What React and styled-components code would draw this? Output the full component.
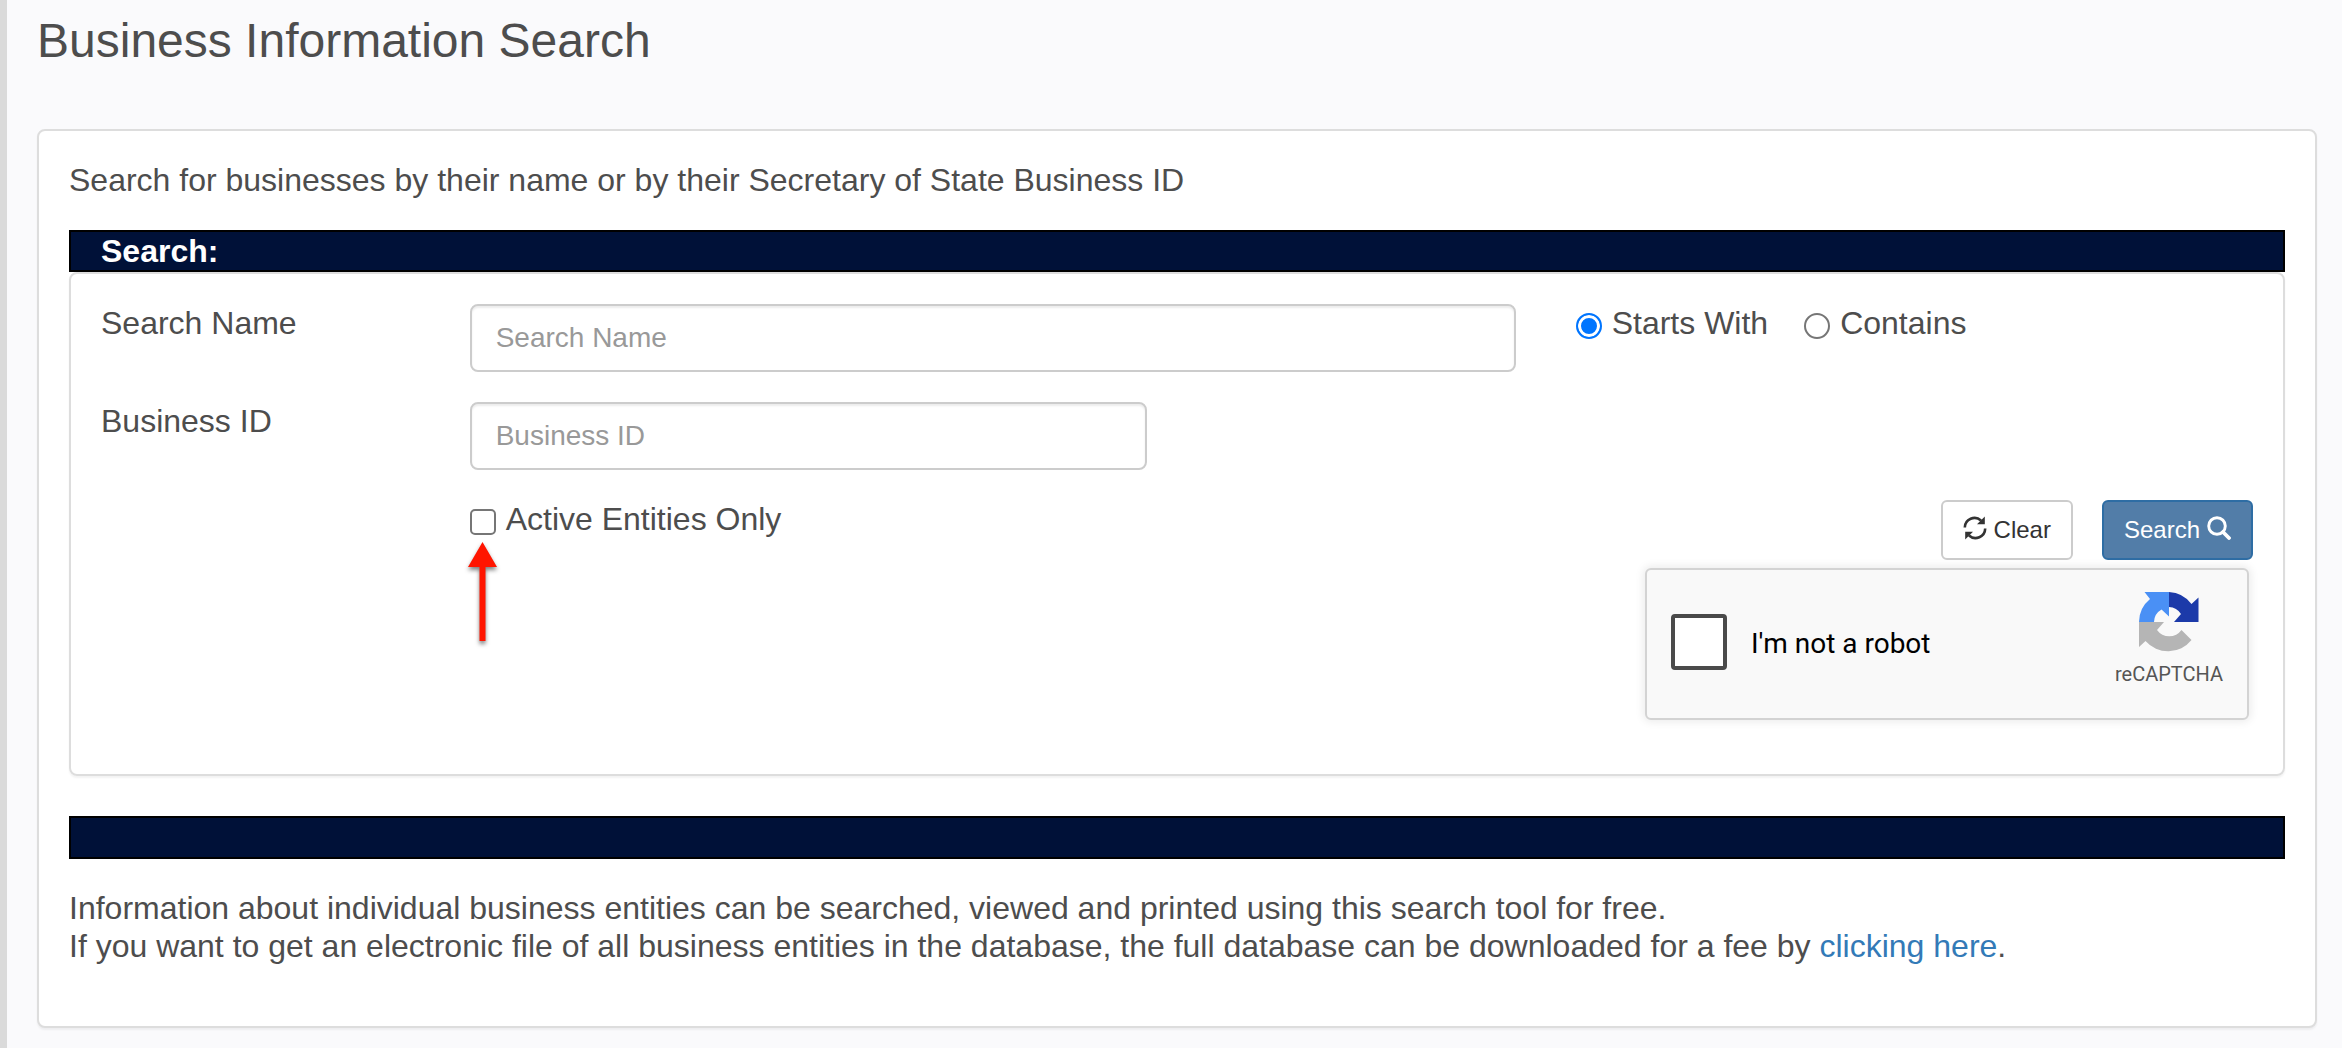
import React, { useState } from "react"
import styled, { createGlobalStyle } from "styled-components"

const GlobalStyle = createGlobalStyle`
  * {
    box-sizing: border-box;
  }

  body {
    margin: 0;
    background: #fafafc;
    color: #4d4d4d;
    font-family: "Liberation Sans", Arial, sans-serif;
    font-size: 32px;
    line-height: 38px;
  }
`

const RefreshIcon = () => (
  <IconSvg viewBox="0 0 24 24" aria-hidden="true">
    <path d="M1.8 11.500A9.700 9.700 0 0 1 18 4.500" fill="none" stroke="currentColor" strokeWidth="2.600" />
    <path d="M21.800 0.500V8.200H14Z" fill="currentColor" />
    <path d="M22.200 12.500A9.700 9.700 0 0 1 6 19.500" fill="none" stroke="currentColor" strokeWidth="2.600" />
    <path d="M2.200 23.500V15.800H10Z" fill="currentColor" />
  </IconSvg>
)

const SearchIcon = () => (
  <IconSvg viewBox="0 0 24 24" aria-hidden="true">
    <circle cx="10" cy="10" r="8.300" fill="none" stroke="currentColor" strokeWidth="2.900" />
    <path d="M16 16L22 22" stroke="currentColor" strokeWidth="3.800" strokeLinecap="round" />
  </IconSvg>
)

const CaptchaLogo = () => (
  <LogoSvg viewBox="0 0 60 60" aria-hidden="true">
    <path d="M30 0A30 30 0 0 1 52.500 12L59.500 5.500V30H35L42 22A15 15 0 0 0 30 15Z" fill="#1c3aa9" />
    <path d="M0 30A30 30 0 0 1 11 7L5.500 0H30V24.500L22.500 17.500A15 15 0 0 0 15 30Z" fill="#4a90f5" />
    <path d="M0 30H25L18 38A15 15 0 0 0 42.500 38L52.500 48A30 30 0 0 1 6.500 49L0 55Z" fill="#b5b5b5" />
  </LogoSvg>
)

const Arrow = () => (
  <ArrowSvg viewBox="0 0 29 102" aria-hidden="true">
    <path d="M14.500 0L29 25H17.500V99H11.500V25H0Z" fill="#ff1500" />
  </ArrowSvg>
)

const App = () => {
  const [name, setName] = useState("")
  const [businessId, setBusinessId] = useState("")
  const [mode, setMode] = useState("starts")
  const [activeOnly, setActiveOnly] = useState(false)

  const clear = () => {
    setName("")
    setBusinessId("")
    setMode("starts")
    setActiveOnly(false)
  }

  return (
    <Page>
      <GlobalStyle />
      <Title>Business Information Search</Title>
      <Panel as="main">
        <Intro>
          Search for businesses by their name or by their Secretary of State
          Business ID
        </Intro>
        <Bar>Search:</Bar>
        <Form onSubmit={e => e.preventDefault()}>
          <Cell span={2}>
            <label htmlFor="name">Search Name</label>
          </Cell>
          <Cell span={6}>
            <Input
              id="name"
              placeholder="Search Name"
              value={name}
              onChange={e => setName(e.target.value)}
            />
          </Cell>
          <Options span={4}>
            <Choice>
              <Radio
                name="mode"
                checked={mode === "starts"}
                onChange={() => setMode("starts")}
              />
              Starts With
            </Choice>
            <Choice>
              <Radio
                name="mode"
                checked={mode === "contains"}
                onChange={() => setMode("contains")}
              />
              Contains
            </Choice>
          </Options>

          <Cell span={2}>
            <label htmlFor="businessId">Business ID</label>
          </Cell>
          <Cell span={4}>
            <Input
              id="businessId"
              placeholder="Business ID"
              value={businessId}
              onChange={e => setBusinessId(e.target.value)}
            />
          </Cell>

          <Cell start={3} span={4}>
            <Choice>
              <Checkbox
                checked={activeOnly}
                onChange={e => setActiveOnly(e.target.checked)}
              />
              Active Entities Only
              <Arrow />
            </Choice>
          </Cell>
          <Actions span={6}>
            <Buttons>
              <Button type="button" onClick={clear}>
                <RefreshIcon />
                Clear
              </Button>
              <Button type="submit" $primary>
                Search
                <SearchIcon />
              </Button>
            </Buttons>
            <Captcha>
              <CaptchaLabel>
                <CaptchaBox />
                I'm not a robot
              </CaptchaLabel>
              <Brand>
                <CaptchaLogo />
                reCAPTCHA
              </Brand>
            </Captcha>
          </Actions>
        </Form>
        <Bar $spaced />
        <p>
          Information about individual business entities can be searched,
          viewed and printed using this search tool for free.
          <br />
          If you want to get an electronic file of all business entities in the
          database, the full database can be downloaded for a fee by{" "}
          <Link href="#download">clicking here</Link>.
        </p>
      </Panel>
    </Page>
  )
}

export default App

const Page = styled.div`
  min-height: 100vh;
  padding: 13px 25px 20px 30px;
  border-left: 7px solid #dadada;

  p {
    margin: 0;
  }
`

const Title = styled.h1`
  margin: 0 0 60px;
  font-size: 48px;
  font-weight: 400;
  line-height: 56px;
`

const Panel = styled.div`
  padding: 30px 30px 61px;
  background: #fff;
  border: 2px solid #ddd;
  border-radius: 8px;
  box-shadow: 0 2px 2px rgba(0, 0, 0, 0.05);
`

const Intro = styled.p`
  padding-bottom: 31px;
`

const Bar = styled.div`
  min-height: ${({ $spaced }) => ($spaced ? "43px" : "42px")};
  margin: ${({ $spaced }) => ($spaced ? "40px 0 30px" : "0")};
  padding: 0 30px;
  color: #fff;
  font-weight: 700;
  background: #001138;
  border: 2px solid #000;
`

const Form = styled.form`
  display: grid;
  grid-template-columns: repeat(12, 1fr);
  gap: 30px 60px;
  padding: 30px 30px 54px;
  border: 2px solid #ddd;
  border-radius: 8px;
  box-shadow: 0 2px 2px rgba(0, 0, 0, 0.05);
`

const Cell = styled.div.withConfig({
  shouldForwardProp: prop => !["span", "start"].includes(prop)
})`
  grid-column: ${({ start = "auto", span }) => `${start} / span ${span}`};
`

const Options = styled(Cell)`
  display: flex;
  gap: 36px;
`

const Choice = styled.label`
  position: relative;
  display: inline-flex;
  gap: 10px;
`

const Input = styled.input`
  display: block;
  width: 100%;
  height: 68px;
  padding: 0 24px;
  color: #555;
  font: 28px "Liberation Sans", Arial, sans-serif;
  background: #fff;
  border: 2px solid #ccc;
  border-radius: 8px;
  box-shadow: inset 0 2px 2px rgba(0, 0, 0, 0.075);

  &::placeholder {
    color: #999;
  }
`

const Radio = styled.input.attrs({ type: "radio" })`
  appearance: none;
  width: 26px;
  height: 26px;
  margin: 9px 0 0;
  background: #fff;
  border: 2px solid #767676;
  border-radius: 50%;

  &:checked {
    background: #0075ff;
    border-color: #0075ff;
    box-shadow: inset 0 0 0 3px #fff;
  }
`

const Checkbox = styled.input.attrs({ type: "checkbox" })`
  width: 26px;
  height: 26px;
  margin: 9px 0 0;

  &:not(:checked) {
    appearance: none;
    background: #fff;
    border: 2px solid #767676;
    border-radius: 5px;
  }
`

const ArrowSvg = styled.svg`
  position: absolute;
  top: 42px;
  left: -2px;
  width: 29px;
  height: 102px;
  overflow: visible;
  filter: drop-shadow(0 3px 2px rgba(0, 0, 0, 0.5));
`

const Actions = styled(Cell)`
  display: flex;
  flex-direction: column;
  align-items: flex-end;
  gap: 8px;
`

const Buttons = styled.div`
  display: flex;
  gap: 29px;
`

const Button = styled.button`
  display: flex;
  align-items: center;
  gap: 7px;
  height: 60px;
  padding: 0 20px;
  color: ${({ $primary }) => ($primary ? "#fff" : "#333")};
  font: 24px "Liberation Sans", Arial, sans-serif;
  background: ${({ $primary }) => ($primary ? "#527da8" : "#fff")};
  border: 2px solid ${({ $primary }) => ($primary ? "#2e6da4" : "#ccc")};
  border-radius: 6px;
`

const IconSvg = styled.svg`
  width: 24px;
  height: 24px;
  margin-bottom: 4px;
`

const Captcha = styled.div`
  display: flex;
  align-items: center;
  justify-content: space-between;
  width: 604px;
  height: 152px;
  margin-right: 4px;
  padding: 0 24px;
  color: #000;
  font-family: Roboto, sans-serif;
  background: #f9f9f9;
  border: 2px solid #d3d3d3;
  border-radius: 6px;
  box-shadow: 0 0 8px 2px rgba(0, 0, 0, 0.08);
`

const CaptchaLabel = styled.label`
  display: flex;
  align-items: flex-start;
  gap: 24px;
  font-size: 28px;
  line-height: 60px;
`

const CaptchaBox = styled.input.attrs({ type: "checkbox" })`
  width: 56px;
  height: 56px;
  margin: 0;

  &:not(:checked) {
    appearance: none;
    background: #fff;
    border: 4px solid #4a4a4a;
    border-radius: 4px;
  }
`

const Brand = styled.div`
  display: flex;
  flex-direction: column;
  align-items: center;
  gap: 8px;
  padding-bottom: 8px;
  color: #555;
  font-size: 20px;
  line-height: 28px;
`

const LogoSvg = styled.svg`
  width: 60px;
  height: 60px;
`

const Link = styled.a`
  color: #337ab7;
  text-decoration: none;
`
